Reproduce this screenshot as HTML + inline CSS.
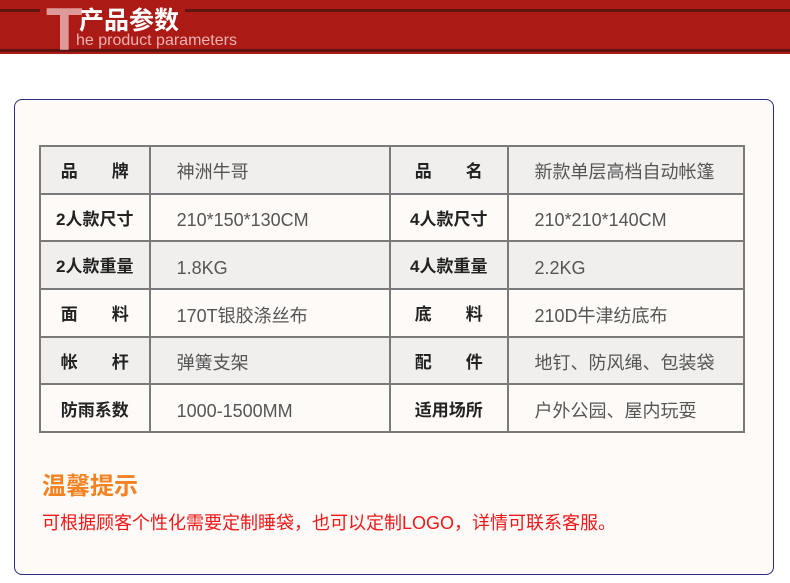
<!DOCTYPE html>
<html><head><meta charset="utf-8"><style>
*{margin:0;padding:0;box-sizing:border-box}
body{width:790px;height:583px;background:#fff;position:relative;overflow:hidden;font-family:"Liberation Sans","Noto Sans CJK SC",sans-serif}
.band{position:absolute;left:0;top:0;width:790px;height:54px;background:#ab1a15}
.l1{position:absolute;top:9px;height:3px;background:#5e1512}
.l2{position:absolute;left:0;top:49px;width:790px;height:3px;background:#5e1512}
.T{position:absolute;left:46px;top:3px;font-size:60px;line-height:54px;font-weight:bold;color:#dd9a98}
.cn{position:absolute;left:79px;top:3px;font-size:25px;font-weight:bold;color:#fff;line-height:32px;font-family:"Noto Sans CJK SC",sans-serif}
.en{position:absolute;left:76px;top:32px;font-size:16px;color:#e9b3b1;line-height:18px}
.box{position:absolute;left:14px;top:99px;width:760px;height:476px;border:1px solid #2a2a80;border-radius:8px;background:#fdfaf8}
table{position:absolute;left:39px;top:145px;border-collapse:collapse;width:706px}
td{border:2px solid #7a7a7a;font-size:18px;line-height:22px;color:#555;height:47.7px;padding-left:26px;padding-top:4px;vertical-align:middle}
td span{display:inline-block;line-height:22px;vertical-align:middle}
td.k{font-weight:bold;color:#222;text-align:center;padding:4px 0 0 0;font-size:17px}
tr.g td{background:#f1efee}
tr.w td{background:#fdfaf8}
.h{position:absolute;left:42px;top:468px;font-size:24px;font-weight:bold;color:#f58220;line-height:32px;font-family:"Noto Sans CJK SC",sans-serif}
.p{position:absolute;left:42px;top:511px;font-size:18px;color:#f01818;line-height:24px}
</style></head><body>
<div class="band"></div>
<div class="l1" style="left:0;width:40px"></div>
<div class="l1" style="left:185px;width:605px"></div>
<div class="l2"></div>
<div class="T">T</div>
<div class="cn">产品参数</div>
<div class="en">he product parameters</div>
<div class="box"></div>
<table>
<colgroup><col style="width:110px"><col style="width:241px"><col style="width:118px"><col style="width:237px"></colgroup>
<tr class="g"><td class="k"><span>品&emsp;&emsp;牌</span></td><td><span>神洲牛哥</span></td><td class="k"><span>品&emsp;&emsp;名</span></td><td><span>新款单层高档自动帐篷</span></td></tr>
<tr class="w"><td class="k"><span>2人款尺寸</span></td><td><span>210*150*130CM</span></td><td class="k"><span>4人款尺寸</span></td><td><span>210*210*140CM</span></td></tr>
<tr class="g"><td class="k"><span>2人款重量</span></td><td><span>1.8KG</span></td><td class="k"><span>4人款重量</span></td><td><span>2.2KG</span></td></tr>
<tr class="w"><td class="k"><span>面&emsp;&emsp;料</span></td><td><span>170T银胶涤丝布</span></td><td class="k"><span>底&emsp;&emsp;料</span></td><td><span>210D牛津纺底布</span></td></tr>
<tr class="g"><td class="k"><span>帐&emsp;&emsp;杆</span></td><td><span>弹簧支架</span></td><td class="k"><span>配&emsp;&emsp;件</span></td><td><span>地钉、防风绳、包装袋</span></td></tr>
<tr class="w"><td class="k"><span>防雨系数</span></td><td><span>1000-1500MM</span></td><td class="k"><span>适用场所</span></td><td><span>户外公园、屋内玩耍</span></td></tr>
</table>
<div class="h">温馨提示</div>
<div class="p">可根据顾客个性化需要定制睡袋，也可以定制LOGO，详情可联系客服。</div>
</body></html>
